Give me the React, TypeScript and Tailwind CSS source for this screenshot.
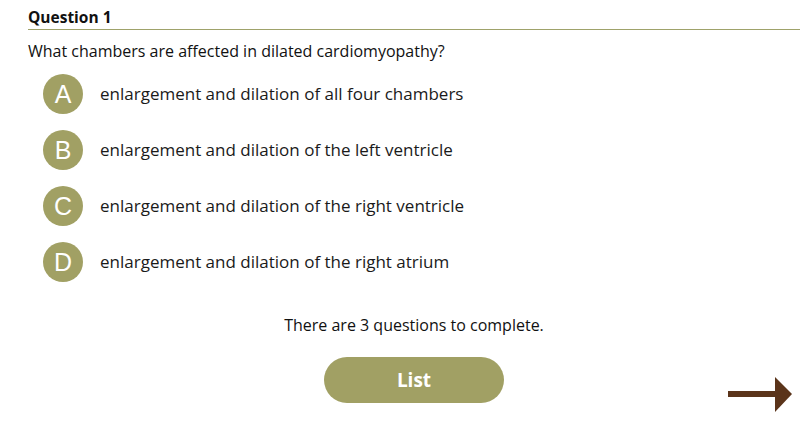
import React from "react";

const options = [
  { letter: "A", text: "enlargement and dilation of all four chambers" },
  { letter: "B", text: "enlargement and dilation of the left ventricle" },
  { letter: "C", text: "enlargement and dilation of the right ventricle" },
  { letter: "D", text: "enlargement and dilation of the right atrium" },
];

const App: React.FC = () => {
  return (
    <div className="w-[807px] h-[424px] bg-white text-[#111] font-['Open_Sans',sans-serif] pl-[28px] pr-[7px] pt-[8px]">
      <div className="border-b border-[#9fa26a] pb-[2px]">
        <h2 className="text-[15.5px] leading-[19px] font-bold">Question 1</h2>
      </div>
      <p className="mt-[12px] text-[16px] leading-[19px]">
        What chambers are affected in dilated cardiomyopathy?
      </p>
      <ul className="mt-[13px] ml-[15px] flex flex-col gap-[16px]">
        {options.map((o) => (
          <li key={o.letter} className="flex items-center gap-[17px]">
            <span className="w-[40px] h-[40px] rounded-full bg-[#a1a064] text-white flex items-center justify-center text-[25px] leading-none font-['Liberation_Sans',Arial,sans-serif]">
              {o.letter}
            </span>
            <span className="text-[17px] leading-[22px] text-[#1a1a1a]">{o.text}</span>
          </li>
        ))}
      </ul>
      <p className="mt-[34px] text-center text-[16px] leading-[19px]">
        There are 3 questions to complete.
      </p>
      <div className="mt-[22px] grid grid-cols-[1fr_auto_1fr] items-start">
        <div />
        <button className="w-[180px] h-[46px] rounded-full bg-[#a1a064] text-white text-[19px] font-bold">
          List
        </button>
        <div className="flex justify-end pr-[8px] pt-[20px]">
          <svg width="64" height="36" viewBox="0 0 64 36" aria-label="Next">
            <rect x="0" y="14" width="48" height="6" fill="#5b341a" />
            <polygon points="47,0 64,17 47,35" fill="#5b341a" />
          </svg>
        </div>
      </div>
    </div>
  );
};

export default App;
